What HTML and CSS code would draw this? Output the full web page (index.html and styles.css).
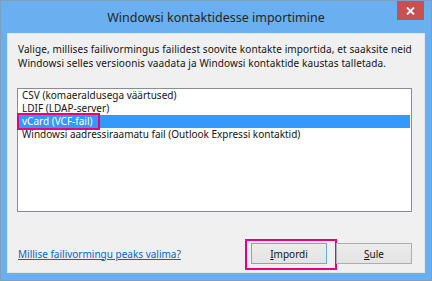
FILE: index.html
```html
<!DOCTYPE html>
<html>
<head>
<meta charset="utf-8">
<link rel="stylesheet" href="styles.css">
</head>
<body>
<div class="window">
  <div class="titlebar">
    <span class="spacer"></span>
    <span class="title">Windowsi kontaktidesse importimine</span>
    <button class="close" aria-label="Sulge">
      <svg width="9" height="8" viewBox="0 0 9 8"><path d="M1 0.5 L8 7.5 M8 0.5 L1 7.5" stroke="#fff" stroke-width="1.8" fill="none"/></svg>
    </button>
  </div>
  <div class="content">
    <p class="desc">Valige, millises failivormingus failidest soovite kontakte importida, et saaksite neid Windowsi selles versioonis vaadata ja Windowsi kontaktide kaustas talletada.</p>
    <ul class="list">
      <li class="item">CSV (komaeraldusega väärtused)</li>
      <li class="item">LDIF (LDAP-server)</li>
      <li class="item selected"><span class="mark"></span>vCard (VCF-fail)</li>
      <li class="item">Windowsi aadressiraamatu fail (Outlook Expressi kontaktid)</li>
    </ul>
    <div class="footer">
      <a class="link" href="#">Millise failivormingu peaks valima?</a>
      <div class="buttons">
        <button class="btn default"><span class="mark-btn"></span><u>I</u>mpordi</button>
        <button class="btn"><u>S</u>ule</button>
      </div>
    </div>
  </div>
</div>
</body>
</html>
```
FILE: styles.css
```css
* { box-sizing: border-box; }
html, body { margin: 0; padding: 0; }
body {
  width: 432px;
  height: 281px;
  font-family: "Noto Sans", "Open Sans", sans-serif;
  font-size: 10px;
  color: #141414;
}
.window {
  width: 432px;
  height: 281px;
  background: #6aaff0;
  border: 1px solid #7f9fc0;
  padding: 0 6px 7px 6px;
  display: flex;
  flex-direction: column;
}
.titlebar {
  height: 32px;
  flex: none;
  display: grid;
  grid-template-columns: 1fr auto 1fr;
}
.title {
  align-self: center;
  font-size: 12.5px;
  color: #262626;
  padding-top: 1px;
}
.close {
  justify-self: end;
  align-self: start;
  margin: 0 1px 0 0;
  width: 27px;
  height: 19px;
  border: 0;
  padding: 0;
  background: #c75050;
  display: flex;
  align-items: center;
  justify-content: center;
}
.content {
  flex: 1;
  background: #f0f0f0;
  border: 1px solid #e2e6ea;
  padding: 8px 12px 0 9px;
  display: flex;
  flex-direction: column;
}
.desc {
  margin: 0 0 0 1px;
  line-height: 14px;
  width: 402px;
  letter-spacing: 0.1px;
}
.list {
  list-style: none;
  margin: 18px 0 0 0;
  padding: 0;
  height: 124px;
  background: #fff;
  border: 1px solid #898c95;
}
.item {
  position: relative;
  height: 13px;
  line-height: 13px;
  padding-left: 4px;
  white-space: nowrap;
}
.item.selected {
  background: #3399ff;
  color: #fff;
  margin-right: 1px;
}
.mark {
  position: absolute;
  left: -1px;
  top: -2px;
  width: 83px;
  height: 17px;
  border: 2px solid #e6007e;
}
.footer {
  display: flex;
  justify-content: space-between;
  align-items: center;
  margin-top: 31px;
}
.link {
  color: #0a64c8;
  text-decoration: underline;
  margin-left: 1px;
}
.buttons {
  display: flex;
  gap: 9px;
}
.btn {
  position: relative;
  width: 76px;
  height: 21px;
  font-family: inherit;
  font-size: 10px;
  color: #141414;
  background: linear-gradient(#ececec, #e3e3e3);
  border: 1px solid #adadad;
  padding: 0;
}
.btn.default {
  border-color: #6fa9e3;
}
.mark-btn {
  position: absolute;
  left: -7px;
  top: -5px;
  width: 92px;
  height: 31px;
  border: 2px solid #e6007e;
}
```
